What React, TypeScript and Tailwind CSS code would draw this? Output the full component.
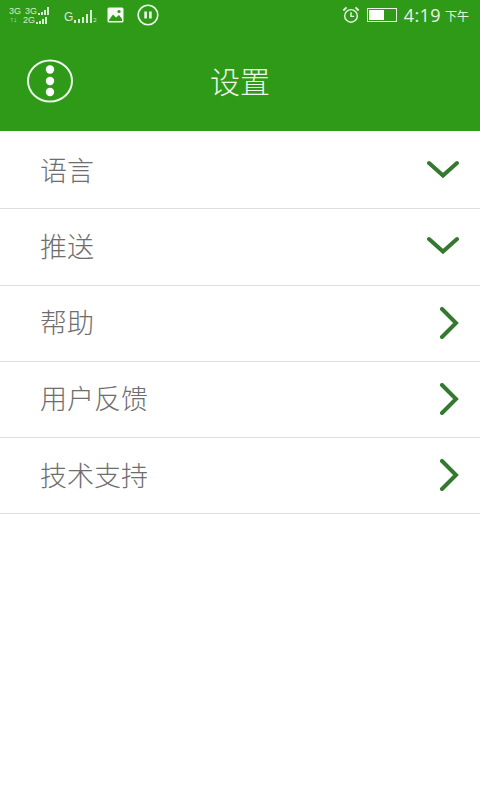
import { ReactNode } from "react";

const cjk = "font-['Noto_Sans_CJK_SC',sans-serif]";

const rows = [
  { name: "语言", icon: "down" },
  { name: "推送", icon: "down" },
  { name: "帮助", icon: "right" },
  { name: "用户反馈", icon: "right" },
  { name: "技术支持", icon: "right" },
];

function Down() {
  return (
    <svg className="mt-[1px]" width="32" height="20" viewBox="0 0 32 20" fill="none" stroke="#35782f" strokeWidth="4" strokeLinecap="round" strokeLinejoin="miter">
      <path d="M2 3 L16 15.5 L30 3" />
    </svg>
  );
}

function Right() {
  return (
    <svg className="mt-[2px]" width="20" height="32" viewBox="0 0 20 32" fill="none" stroke="#35782f" strokeWidth="4" strokeLinecap="round" strokeLinejoin="miter">
      <path d="M3 2 L17 16 L3 30" />
    </svg>
  );
}

function Bars({ heights, gap = "gap-px" }: { heights: number[]; gap?: string }) {
  return (
    <span className={`flex items-end ${gap}`}>
      {heights.map((h, i) => (
        <span key={i} className="w-[2px] bg-[#d8ecd3]" style={{ height: h }} />
      ))}
    </span>
  );
}

function Tiny({ children }: { children: ReactNode }) {
  return <span className="text-[9px] leading-[8px] text-[#d8ecd3] font-['Liberation_Sans',sans-serif]">{children}</span>;
}

function StatusBar() {
  return (
    <div className="flex h-8 items-center justify-between pb-[2px] pl-[9px] pr-[11px]">
      <div className="flex items-center">
        <div className="flex w-[46px] flex-col gap-[1px]">
          <div className="flex h-[8px] items-end gap-[4px] leading-none">
            <Tiny>3G</Tiny>
            <span className="flex items-end gap-[1px]">
              <Tiny>3G</Tiny>
              <Bars heights={[2, 3, 5, 8]} />
            </span>
          </div>
          <div className="flex h-[8px] items-end gap-[6px] leading-none">
            <span className="ml-[1px] text-[7px] leading-[8px] text-[#d8ecd3] font-['Liberation_Sans',sans-serif]">↑↓</span>
            <span className="flex items-end gap-[1px]">
              <Tiny>2G</Tiny>
              <Bars heights={[2, 3, 5, 7]} />
            </span>
          </div>
        </div>
        <div className="ml-[9px] mt-[2px] flex items-end gap-[1px]">
          <span className="text-[12px] leading-[12px] text-[#d8ecd3] font-['Liberation_Sans',sans-serif]">G</span>
          <Bars heights={[3, 4, 6, 9, 13]} gap="gap-[2px]" />
          <span className="text-[6px] leading-[6px] text-[#d8ecd3] font-['Liberation_Sans',sans-serif]">2</span>
        </div>
        <svg className="ml-[10px]" width="17" height="16" viewBox="0 0 17 16">
          <rect x="0.5" y="0.5" width="16" height="15" rx="1.5" fill="#f4faf2" />
          <path d="M2 13 L6 7.5 L9 10.5 L12 8 L15 12 V14 H2 Z" fill="#2f9a18" />
          <circle cx="12" cy="4.5" r="1.6" fill="#2f9a18" />
        </svg>
        <svg className="ml-[13px]" width="22" height="22" viewBox="0 0 22 22" fill="none" stroke="#f0f8ee">
          <circle cx="11" cy="11" r="9.8" strokeWidth="1.6" />
          <path d="M8.6 7.5 V14.5 M13.4 7.5 V14.5" strokeWidth="2.6" />
        </svg>
      </div>
      <div className="flex items-center">
        <svg width="18" height="18" viewBox="0 0 20 20" fill="none" stroke="#e8f4e4" strokeWidth="1.6">
          <circle cx="10" cy="11" r="7" />
          <path d="M10 7 V11.5 H13.5" />
          <path d="M1.5 5 L5 1.5 M18.5 5 L15 1.5" strokeWidth="2" />
        </svg>
        <div className="ml-[7px] flex h-[14px] w-[30px] items-center border border-[#e8f4e4] p-[1px]">
          <div className="h-full w-[15px] bg-white" />
        </div>
        <span className="ml-[7px] text-[18px] leading-none tracking-[0.4px] text-[#e8f4e4] font-['Open_Sans',sans-serif]">4:19</span>
        <span className={`ml-[4px] mt-[2px] text-[12px] leading-none text-[#e8f4e4] ${cjk}`}>下午</span>
      </div>
    </div>
  );
}

export default function App() {
  return (
    <div className={`min-h-[800px] w-[480px] bg-white ${cjk}`}>
      <div className="h-[131px] bg-[#2f9a18]">
        <StatusBar />
        <div className="flex h-[99px] items-center pb-[3px] pl-[27px]">
          <svg className="mt-[2px]" width="46" height="44" viewBox="0 0 46 44" fill="none">
            <ellipse cx="23" cy="22" rx="22" ry="20.5" stroke="#eef7ec" strokeWidth="2" />
            <circle cx="23" cy="10.5" r="4.2" fill="#fff" />
            <circle cx="23" cy="22" r="4.2" fill="#fff" />
            <circle cx="23" cy="33" r="4.2" fill="#fff" />
          </svg>
          <h1 className="ml-[137px] text-[30px] font-light leading-none text-[#eef7ec]">设置</h1>
        </div>
      </div>
      <div className="pt-[2px]">
        {rows.map((row) => (
          <div key={row.name} className="flex h-[76.25px] items-center justify-between border-b border-[#dedede] pb-[3px] pl-10 pr-[21px]">
            <span className="text-[27px] font-light leading-none text-[#6e6e6e]">{row.name}</span>
            {row.icon === "down" ? <Down /> : <Right />}
          </div>
        ))}
      </div>
    </div>
  );
}
